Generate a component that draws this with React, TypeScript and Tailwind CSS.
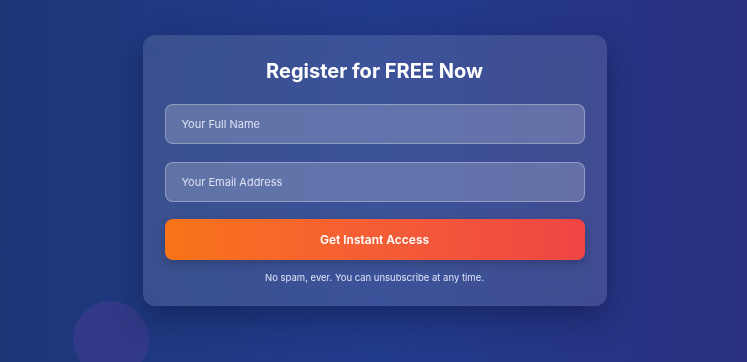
export default function App() {
  return (
    <div
      className="relative flex h-[362px] w-full justify-center overflow-hidden bg-gradient-to-r from-[#1d3678] via-[#213b8b] to-[#28307f] pt-[35px]"
      style={{ fontFamily: "Inter, 'Liberation Sans', sans-serif" }}
    >
      {/* decorative blob */}
      <div className="absolute left-[73px] top-[301px] h-[76px] w-[76px] rounded-full bg-[#3a3c8c]/70" />

      <div className="relative ml-[2px] h-[271px] w-[464px] rounded-xl bg-white/[0.12] px-[22px] pt-[22px] shadow-[0_12px_30px_rgba(10,20,60,0.45)] backdrop-blur">
        <h2 className="mb-[19px] text-center text-[20px] font-bold leading-7 text-white">Register for FREE Now</h2>
        <form className="flex flex-col gap-[18px]">
          <input
            type="text"
            placeholder="Your Full Name"
            className="h-10 w-full rounded-lg border border-white/30 bg-white/20 px-4 text-[11px] text-white outline-none placeholder:text-[#dde2f5]"
          />
          <input
            type="email"
            placeholder="Your Email Address"
            className="h-10 w-full rounded-lg border border-white/30 bg-white/20 px-4 text-[11px] text-white outline-none placeholder:text-[#dde2f5]"
          />
          <button
            type="button"
            className="-mt-px h-[41px] w-full rounded-lg bg-gradient-to-r from-[#f97316] to-[#ef4444] text-[12px] font-semibold text-white shadow-[0_4px_10px_rgba(0,0,0,0.2)]"
          >
            Get Instant Access
          </button>
        </form>
        <p className="mt-[10px] text-center text-[9.5px] leading-4 text-[#dfe4f7]">
          No spam, ever. You can unsubscribe at any time.
        </p>
      </div>
    </div>
  );
}
